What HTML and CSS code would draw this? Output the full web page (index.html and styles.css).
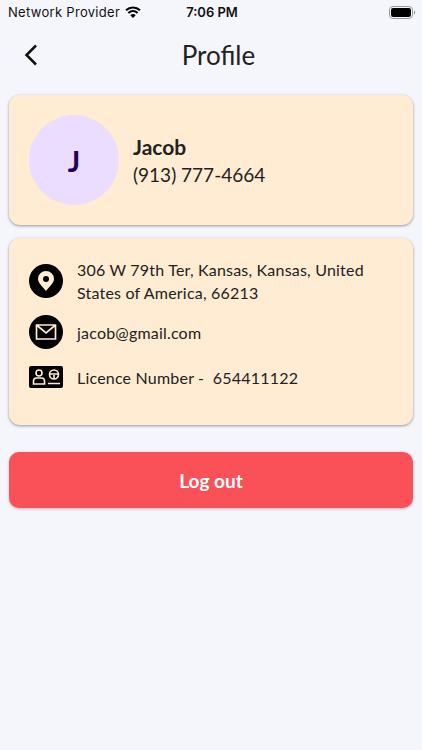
FILE: index.html
```html
<!DOCTYPE html>
<html lang="en">
<head>
<meta charset="utf-8">
<title>Profile</title>
<link rel="stylesheet" href="styles.css">
</head>
<body>
<header class="status">
  <div class="carrier"><span class="provider">Network Provider</span>
    <svg class="wifi" viewBox="0 0 16 12"><path d="M1 4.3a10.2 10.2 0 0 1 14 0M3.4 6.9a6.7 6.7 0 0 1 9.2 0" fill="none" stroke="#000" stroke-width="2"/><path d="M8 12 5.3 9.2a3.9 3.9 0 0 1 5.4 0z"/></svg>
  </div>
  <span class="time">7:06 PM</span>
  <svg class="battery" viewBox="0 0 27 13"><rect x=".5" y=".5" width="23" height="12" rx="3.5" fill="none" stroke="#999"/><rect x="2" y="2" width="20" height="9" rx="2.2"/><path d="M25 4.5v4c1.8-.7 1.8-3.3 0-4z" fill="#999"/></svg>
</header>
<nav class="nav">
  <svg class="back" viewBox="0 0 14 22"><path d="M12 1.5 2.5 11l9.500 9.500" fill="none" stroke="#111" stroke-width="2.500"/></svg>
  <h1 class="title">Profile</h1>
</nav>
<main class="content">
  <section class="card person">
    <div class="avatar">J</div>
    <div class="identity"><h2 class="name">Jacob</h2><p class="phone">(913) 777-4664</p></div>
  </section>
  <section class="card details">
    <div class="row address">
      <svg class="icon" viewBox="0 0 34 34"><circle cx="17" cy="17" r="17"/><path d="M17 27c-3-4-8-8-8-12a8 8 0 0 1 16 0c0 4-5 8-8 12z" fill="#ffecd2"/><circle cx="17" cy="15" r="3"/></svg>
      <p class="text">306 W 79th Ter, Kansas, Kansas, United<br>States of America, 66213</p>
    </div>
    <div class="row email">
      <svg class="icon" viewBox="0 0 34 34"><circle cx="17" cy="17" r="17"/><path d="M7.500 10h19v14h-19zl9.500 8 9.500-8" fill="none" stroke="#ffecd2" stroke-width="1.700"/></svg>
      <p class="text">jacob@gmail.com</p>
    </div>
    <div class="row licence">
      <svg class="icon licence-icon" viewBox="0 0 34 22"><rect width="34" height="22" rx="2"/><g fill="none" stroke="#ffecd2" stroke-width="1.600"><circle cx="10" cy="7" r="3"/><path d="M4.500 18v-3q0-3 3-3h5q3 0 3 3v3z"/><circle cx="25" cy="8.500" r="4.500"/><path d="M20.500 8h9M25 9v4M19 17.500h12"/></g></svg>
      <p class="text">Licence Number -&nbsp; 654411122</p>
    </div>
  </section>
  <button class="logout">Log out</button>
</main>
</body>
</html>
```
FILE: styles.css
```css
* { box-sizing: border-box; }
body { margin: 0; height: 750px; overflow: hidden; background: #f5f6fc; color: #222; font-family: Lato, sans-serif; }
h1, h2, p { margin: 0; font-weight: 400; }
svg { display: block; flex: none; }
.status { display: grid; grid-template-columns: 1fr auto 1fr; align-items: center; height: 24px; padding: 0 6px 0 8px; font: 13px/24px Inter, sans-serif; color: #111; }
.carrier { display: flex; align-items: center; gap: 5px; }
.provider { letter-spacing: .3px; }
.wifi { width: 16px; height: 12px; }
.time { font-weight: 600; }
.battery { width: 27px; height: 13px; justify-self: end; }
.nav { display: grid; grid-template-columns: 40px 1fr 40px; align-items: center; height: 62px; padding: 0 9px 0 24px; }
.back { width: 14px; height: 22px; }
.title { font-size: 26px; line-height: 32px; text-align: center; }
.content { padding: 9px 9px 0; }
.card { border-radius: 11px; background: #ffecd2; box-shadow: 0 1px 3px rgba(0,0,0,.4); }
.person { display: flex; align-items: center; gap: 14px; height: 130px; padding: 0 20px; }
.avatar { width: 90px; height: 90px; border-radius: 50%; background: #eaddff; color: #21005d; font-size: 29px; font-weight: 700; line-height: 92px; text-align: center; }
.name { font-size: 21px; line-height: 28px; font-weight: 700; }
.phone { font-size: 19px; line-height: 27px; }
.details { height: 187px; margin-top: 13px; padding: 20px; }
.row { display: flex; align-items: center; gap: 14px; }
.icon { width: 34px; height: 34px; }
.licence-icon { height: 22px; }
.text { font-size: 16px; line-height: 23px; letter-spacing: .2px; white-space: nowrap; }
.address { height: 46px; }
.email { height: 34px; margin-top: 11px; }
.licence { height: 22px; margin-top: 17px; }
.logout { display: block; width: 100%; height: 56px; margin-top: 27px; padding: 0; border: 0; border-radius: 10px; background: #fa5058; box-shadow: 0 1px 3px rgba(0,0,0,.25); color: #fff; font: 700 19px/58px Lato, sans-serif; }
```
